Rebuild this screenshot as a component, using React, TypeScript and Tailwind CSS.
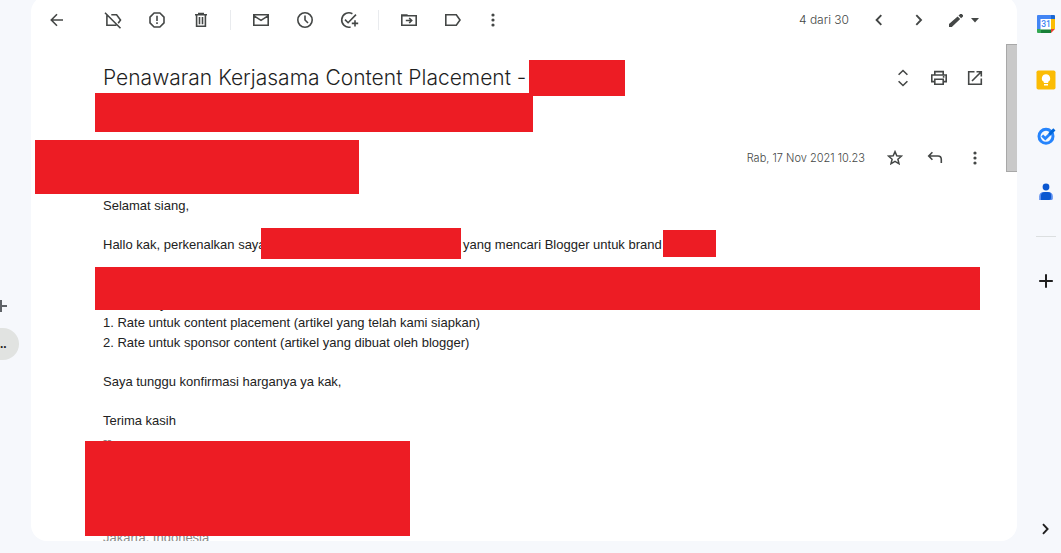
import type { ReactNode } from "react";

function Icon({ children, size = "size-5" }: { children: ReactNode; size?: string }) {
  return (
    <svg
      viewBox="0 0 20 20"
      className={`${size} shrink-0`}
      fill="none"
      stroke="currentColor"
      strokeWidth="1.6"
      aria-hidden="true"
    >
      {children}
    </svg>
  );
}

function IconButton({ label, children, className = "w-10" }: { label: string; children: ReactNode; className?: string }) {
  return (
    <button type="button" aria-label={label} className={`flex h-9 shrink-0 items-center justify-center text-[#444746] ${className}`}>
      {children}
    </button>
  );
}

function Dots() {
  return (
    <Icon>
      <g fill="currentColor" stroke="none">
        <circle cx="10" cy="5" r="1.6" />
        <circle cx="10" cy="10" r="1.6" />
        <circle cx="10" cy="15" r="1.6" />
      </g>
    </Icon>
  );
}

function Divider() {
  return <span className="mr-2 ml-[7px] h-5 w-px shrink-0 bg-[#e9ebee]" />;
}

function Toolbar() {
  return (
    <header className="flex h-12 shrink-0 items-center pr-[37px] pl-1">
      <IconButton label="Kembali" className="mr-3 w-11">
        <Icon>
          <path d="M16 10H5M10 4.3 4.3 10 10 15.7" />
        </Icon>
      </IconButton>
      <IconButton label="Hapus label" className="w-11">
        <Icon>
          <path d="M8.3 4.8H13.6L17.5 10 15.2 13.2M3.9 5.3V15.2H13.4M2 2.7 17.5 18.2" />
        </Icon>
      </IconButton>
      <IconButton label="Laporkan spam" className="w-11">
        <Icon>
          <path d="M7.1 3H12.9L17 7.1V12.9L12.9 17H7.1L3 12.9V7.1Z" />
          <path d="M10 5.8V11M10 12.3V14" />
        </Icon>
      </IconButton>
      <IconButton label="Hapus" className="w-11">
        <Icon>
          <path d="M4 4.8H16M7.8 4V3.6H12.2V4M5.6 5V16.2H14.4V5M8.5 7V14.2M11.5 7V14.2" />
        </Icon>
      </IconButton>
      <Divider />
      <IconButton label="Tandai belum dibaca" className="w-11">
        <Icon>
          <path d="M2.8 4.8H17.2V15.2H2.8ZM3 5.8 10 10.3 17 5.8" />
        </Icon>
      </IconButton>
      <IconButton label="Tunda" className="w-11">
        <Icon>
          <circle cx="10" cy="10" r="7.2" />
          <path d="M10 5.5V10L13 13" />
        </Icon>
      </IconButton>
      <IconButton label="Tambahkan ke Tugas" className="w-11">
        <Icon>
          <path d="M13.4 3.7A7.2 7.2 0 1 0 11.6 17M6 9.6 9.1 12.7 17 4.6M16 10.2V16.6M12.8 13.4H19.2" />
        </Icon>
      </IconButton>
      <Divider />
      <IconButton label="Pindahkan ke" className="w-11">
        <Icon>
          <path d="M2.8 5.8H17.2V15.2H2.8Z" />
          <path d="M2 4.2H8.2L10 6H2Z" fill="currentColor" stroke="none" />
          <path d="M6.8 10.5H12.5M10.2 8 12.7 10.5 10.2 13" />
        </Icon>
      </IconButton>
      <IconButton label="Label" className="w-11">
        <Icon>
          <path d="M2.8 4.8H13.3L17 10 13.3 15.2H2.8Z" />
        </Icon>
      </IconButton>
      <IconButton label="Lainnya" className="w-9">
        <Dots />
      </IconButton>
      <span className="mr-[10px] ml-auto whitespace-nowrap font-['Inter',sans-serif] text-xs font-light text-[#444746]">4 dari 30</span>
      <IconButton label="Lebih baru">
        <Icon>
          <path d="M12.3 5.2 7.6 10 12.3 14.8" strokeWidth="1.9" />
        </Icon>
      </IconButton>
      <IconButton label="Lebih lama">
        <Icon>
          <path d="M7.3 5.2 12 10 7.3 14.8" strokeWidth="1.9" />
        </Icon>
      </IconButton>
      <button type="button" aria-label="Alat input" className="ml-[7px] flex h-9 items-center gap-1 text-[#444746]">
        <Icon>
          <path d="M3 17V14L11.6 6.4 14.2 9 5.8 17ZM12.5 5.6 14.2 4H15.8L17 5.2V6.4L15.1 8.2Z" fill="currentColor" stroke="none" />
        </Icon>
        <svg viewBox="0 0 10 10" className="size-[10px]" fill="currentColor" aria-hidden="true">
          <path d="M1 3H9L5 7.4Z" />
        </svg>
      </button>
    </header>
  );
}

function Redaction({ className }: { className: string }) {
  return <span className={`block shrink-0 bg-[#ed1c24] ${className}`} />;
}

function Message() {
  return (
    <article className="min-w-0 flex-1 pt-4 pl-1">
      <div className="flex h-9 items-center pr-[13px] pl-[68px]">
        <h2 className="w-[426px] whitespace-nowrap font-['Inter',sans-serif] text-[21px] leading-7 font-light text-[#1f1f1f]">
          Penawaran Kerjasama Content Placement -
        </h2>
        <Redaction className="h-9 w-24" />
        <div className="ml-auto flex">
          <IconButton label="Luaskan semua" className="w-9">
            <Icon>
              <path d="M5.6 6.8 10 2.5 14.4 6.8M5.6 13.2 10 17.5 14.4 13.2" />
            </Icon>
          </IconButton>
          <IconButton label="Cetak semua" className="w-9">
            <Icon>
              <path d="M5.8 6.6V3.6H14.2V6.6M5.6 13.6H2.8V7H17.2V13.6H14.4M5.8 11.2H14.2V16.3H5.8Z" />
              <path d="M13.8 8.9H15.4" />
            </Icon>
          </IconButton>
          <IconButton label="Di jendela baru" className="w-9">
            <Icon>
              <path d="M9.5 3.7H3.7V16.3H16.3V10.5M11.5 3.7H16.3V8.5M16 4 7 13" />
            </Icon>
          </IconButton>
        </div>
      </div>
      <Redaction className="-mt-[3px] ml-[60px] h-[39px] w-[438px]" />
      <div className="mt-2 flex items-start pr-[11px]">
        <Redaction className="h-[54px] w-[324px]" />
        <div className="ml-auto flex items-center">
          <time className="mr-[10px] whitespace-nowrap font-['Inter',sans-serif] text-[11px] font-light text-[#444746]">Rab, 17 Nov 2021 10.23</time>
          <IconButton label="Bintangi">
            <Icon>
              <path d="M10 3.6 11.8 7.8 16.4 8.2 12.9 11.3 14 15.8 10 13.4 6 15.8 7.1 11.3 3.6 8.2 8.2 7.8Z" strokeWidth="1.5" />
            </Icon>
          </IconButton>
          <IconButton label="Balas">
            <Icon>
              <path d="M7.4 4.2 3.7 8 7.4 11.8M4 8H13Q16.3 8 16.3 11.5V15" />
            </Icon>
          </IconButton>
          <IconButton label="Opsi lainnya">
            <Dots />
          </IconButton>
        </div>
      </div>
      <div className="mt-0.5 mr-[26px] ml-[68px] font-['Liberation_Sans',Arial,sans-serif] text-[13px] leading-normal text-[#222222]">
        <p>Selamat siang,</p>
        <br />
        <p className="flex items-center whitespace-nowrap">
          <span className="w-[158px]">Hallo kak, perkenalkan saya</span>
          <Redaction className="relative -mt-[7px] mr-[2px] -mb-[5px] h-[31px] w-[200px]" />
          <span className="w-[200px]">yang mencari Blogger untuk brand</span>
          <Redaction className="-mt-[5px] -mb-[3px] h-[27px] w-[53px]" />
        </p>
        <div className="relative">
          <br />
          <br />
          <p className="pl-[57px]">y</p>
          <Redaction className="absolute top-3 right-0 -left-2 h-[43px]" />
        </div>
        <p>1. Rate untuk content placement (artikel yang telah kami siapkan)</p>
        <p>2. Rate untuk sponsor content (artikel yang dibuat oleh blogger)</p>
        <br />
        <p>Saya tunggu konfirmasi harganya ya kak,</p>
        <br />
        <p>Terima kasih</p>
        <div className="relative text-[#888888]">
          <p>--</p>
          <Redaction className="absolute top-[11px] -left-[18px] h-[95px] w-[325px]" />
          <p className="pt-[78px]">Jakarta, Indonesia</p>
        </div>
      </div>
    </article>
  );
}

function SidePanel() {
  return (
    <aside className="flex w-11 shrink-0 flex-col items-center pt-[14px] pb-[14px] pl-[14px]">
      <div className="flex flex-col gap-9">
        <button type="button" aria-label="Kalender" className="size-5">
          <svg viewBox="0 0 20 20" className="size-5" aria-hidden="true">
            <path d="M2 1H15V5H5V15H1V2Q1 1 2 1Z" fill="#4285f4" />
            <path d="M15 1H18Q19 1 19 2V5H15Z" fill="#1967d2" />
            <path d="M15 5H19V15H15Z" fill="#fbbc04" />
            <path d="M5 15H15V19H5Z" fill="#188038" />
            <path d="M1 15H5V19H2Q1 19 1 18Z" fill="#34a853" />
            <path d="M15 15H19L15 19Z" fill="#ea4335" />
            <path d="M4.5 5H15V15.5H4.5Z" fill="#fff" />
            <text x="10" y="13.4" textAnchor="middle" fontSize="8.5" fontWeight="500" fontFamily="Roboto, sans-serif" fill="#4285f4">31</text>
          </svg>
        </button>
        <button type="button" aria-label="Keep" className="size-5">
          <svg viewBox="0 0 20 20" className="size-5" aria-hidden="true">
            <rect x="0.5" y="0.5" width="19" height="19" rx="1.8" fill="#fbbc04" />
            <path d="M10 4.2A4.1 4.1 0 0 0 7.8 11.8V13H12.2V11.8A4.1 4.1 0 0 0 10 4.2ZM8 14H12V15.5H8Z" fill="#fff" />
          </svg>
        </button>
        <button type="button" aria-label="Tasks" className="size-5">
          <svg viewBox="0 0 20 20" className="size-5" fill="none" aria-hidden="true">
            <circle cx="10" cy="10.3" r="7" stroke="#2684fc" strokeWidth="3" />
            <path d="M6.2 9.6 9.3 12.6 14 7.9" stroke="#2684fc" strokeWidth="2.8" />
            <path d="M13.4 8.4 18.4 3.4" stroke="#0066da" strokeWidth="3" />
          </svg>
        </button>
        <button type="button" aria-label="Kontak" className="size-5">
          <svg viewBox="0 0 20 20" className="size-5" aria-hidden="true">
            <circle cx="10" cy="5" r="3.4" fill="#0b57d0" />
            <path d="M3.2 18V14.5Q3.2 10 8 10H12Q16.8 10 16.8 14.5V16.5Q16.8 18 15.3 18Z" fill="#5b8def" />
            <path d="M5 18V13Q5.5 10 9 10H11.5Q15 10 15 13V16Q15 18 13 18Z" fill="#0b57d0" />
          </svg>
        </button>
      </div>
      <span className="mt-[34px] h-px w-5 shrink-0 bg-[#dcdfe0]" />
      <button type="button" aria-label="Dapatkan add-on" className="mt-[34px] size-5 text-[#1f1f1f]">
        <Icon>
          <path d="M10 3.2V16.8M3.2 10H16.8" strokeWidth="2" />
        </Icon>
      </button>
      <button type="button" aria-label="Sembunyikan panel samping" className="mt-auto size-5 text-[#1f1f1f]">
        <Icon>
          <path d="M7 5.2 11.6 10 7 14.8" strokeWidth="1.9" />
        </Icon>
      </button>
    </aside>
  );
}

export default function App() {
  return (
    <div className="flex h-screen overflow-hidden bg-[#f6f8fc]">
      <nav className="flex w-[31px] shrink-0 flex-col items-start overflow-hidden pt-[296px]">
        <button type="button" aria-label="Buat label baru" className="-ml-[9px] size-5 shrink-0 text-[#5f6368]">
          <Icon>
            <path d="M10 4V16M4 10H16" strokeWidth="2" />
          </Icon>
        </button>
        <button type="button" aria-label="Label" className="mt-3 flex h-8 w-[19px] shrink-0 items-center rounded-r-full bg-[#e1e3e1] font-['Liberation_Sans',Arial,sans-serif] text-xs font-bold text-[#1f1f1f]">
          ..
        </button>
      </nav>
      <main className="-mt-1 mb-3 flex min-w-0 flex-1 flex-col overflow-hidden rounded-2xl bg-white">
        <Toolbar />
        <div className="flex min-h-0 flex-1">
          <Message />
          <div className="w-[11px] shrink-0">
            <div className="h-32 border border-r-0 border-[#a8a8a8] bg-[#c9c9c9]" />
          </div>
        </div>
      </main>
      <SidePanel />
    </div>
  );
}
